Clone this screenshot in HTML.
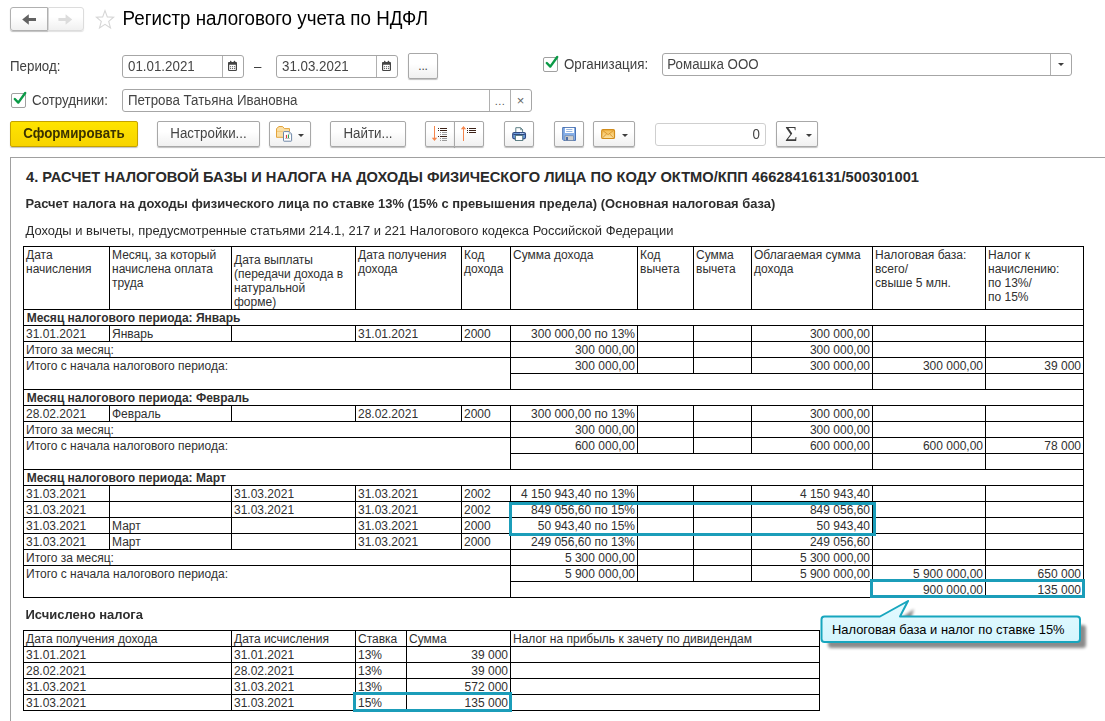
<!DOCTYPE html>
<html lang="ru">
<head>
<meta charset="utf-8">
<title>Регистр налогового учета по НДФЛ</title>
<style>
html,body{margin:0;padding:0;background:#fff;}
body{width:1105px;height:721px;position:relative;overflow:hidden;font-family:"Liberation Sans",Arial,sans-serif;color:#333;}
.abs{position:absolute;}
.t{position:absolute;white-space:nowrap;font-size:13.33px;line-height:16px;color:#404040;transform:scaleY(1.07);transform-origin:0 12.4px;}
.btn{position:absolute;box-sizing:border-box;border:1px solid #a8a8a8;border-radius:2px;background:linear-gradient(#ffffff 0%,#ffffff 40%,#f0f0f0 100%);box-shadow:0 1px 1px rgba(0,0,0,.25);}
.btn .lbl{position:absolute;left:0;right:0;text-align:center;font-size:13.33px;line-height:16px;color:#444;white-space:nowrap;transform:scaleY(1.07);transform-origin:0 12.4px;}
.inp{position:absolute;box-sizing:border-box;border:1px solid #a6a6a6;border-radius:3px;background:#fff;}
.inp .v{position:absolute;left:5px;font-size:13.33px;line-height:16px;color:#444;white-space:nowrap;transform:scaleY(1.07);transform-origin:0 12.4px;}
.inp .sep{position:absolute;top:0;bottom:0;width:1px;background:#b0b0b0;}
.chk{position:absolute;box-sizing:border-box;width:15px;height:15px;border:1px solid #a0a0a0;border-radius:2px;background:#fff;}
.arr{position:absolute;width:0;height:0;margin-left:.5px;border-left:3px solid transparent;border-right:3px solid transparent;border-top:3.3px solid #3e3e3e;}
#panel{position:absolute;left:10px;top:157px;width:1100px;height:600px;box-sizing:border-box;border:1px solid #a0a0a0;border-right:none;border-bottom:none;background:#fff;}
.c{position:absolute;box-sizing:border-box;border:1px solid #000;font-size:12px;line-height:14px;color:#303030;padding:1px 2px 0 2px;overflow:hidden;}
.c.r{text-align:right;padding-right:2px;}
.c.b{font-weight:bold;padding-left:2.7px;}
.c.h3{padding-top:6px;}
.hl{position:absolute;box-sizing:border-box;border:3px solid #1b9db9;}
</style>
</head>
<body>

<!-- navigation -->
<div class="btn" style="left:48px;top:7px;width:36px;height:24px;border-color:#dcdcdc;border-radius:0 3px 3px 0;box-shadow:0 1px 1px rgba(0,0,0,.12);"></div>
<div class="btn" style="left:10px;top:7px;width:38px;height:24px;border-radius:3px 0 0 3px;border-color:#b0b0b0;"></div>
<svg class="abs" style="left:10px;top:7px" width="74" height="24" viewBox="0 0 74 24">
  <path d="M12.2 12.5 L18.8 7.3 V11 H26 V14 H18.8 V17.7 Z" fill="#626262"/>
  <path d="M62.2 12.5 L55.6 7.3 V11 H48.4 V14 H55.6 V17.7 Z" fill="#dcdcdc"/>
</svg>
<svg class="abs" style="left:94px;top:8px" width="22" height="22" viewBox="0 0 22 22">
  <path d="M11 2.6 L13.3 8.9 L19.6 9.2 L14.7 13.4 L16.5 20 L11 16.3 L5.5 20 L7.3 13.4 L2.4 9.2 L8.7 8.9 Z" fill="none" stroke="#d6d6d6" stroke-width="1.1" stroke-linejoin="miter"/>
</svg>
<div class="abs" style="left:122.5px;top:5.6px;font-size:18.79px;line-height:26px;transform:scaleY(1.04);transform-origin:0 19.2px;color:#000;white-space:nowrap;">Регистр налогового учета по НДФЛ</div>

<!-- row 1 -->
<div class="t" style="left:10px;top:59px;">Период:</div>
<div class="inp" style="left:122px;top:55px;width:122px;height:23px;"><div class="v" style="top:3px">01.01.2021</div><div class="sep" style="left:99px"></div>
  <svg class="abs" style="left:103px;top:3px" width="14" height="14" viewBox="0 0 14 14"><rect x="2.6" y="3.6" width="7.8" height="7.9" rx=".8" fill="#fff" stroke="#444" stroke-width="1.2"/><rect x="2.2" y="3.2" width="8.6" height="2.5" rx=".6" fill="#444"/><rect x="4" y="1.7" width="1.3" height="2.2" rx=".5" fill="#444"/><rect x="7.8" y="1.7" width="1.3" height="2.2" rx=".5" fill="#444"/><g fill="#444"><rect x="4.1" y="7.2" width="1" height="1"/><rect x="6.1" y="7.2" width="1" height="1"/><rect x="8.1" y="7.2" width="1" height="1"/><rect x="4.1" y="9.1" width="1" height="1"/><rect x="6.1" y="9.1" width="1" height="1"/><rect x="8.1" y="9.1" width="1" height="1"/></g></svg>
</div>
<div class="t" style="left:254px;top:59px;">–</div>
<div class="inp" style="left:276px;top:55px;width:122px;height:23px;"><div class="v" style="top:3px">31.03.2021</div><div class="sep" style="left:99px"></div>
  <svg class="abs" style="left:103px;top:3px" width="14" height="14" viewBox="0 0 14 14"><rect x="2.6" y="3.6" width="7.8" height="7.9" rx=".8" fill="#fff" stroke="#444" stroke-width="1.2"/><rect x="2.2" y="3.2" width="8.6" height="2.5" rx=".6" fill="#444"/><rect x="4" y="1.7" width="1.3" height="2.2" rx=".5" fill="#444"/><rect x="7.8" y="1.7" width="1.3" height="2.2" rx=".5" fill="#444"/><g fill="#444"><rect x="4.1" y="7.2" width="1" height="1"/><rect x="6.1" y="7.2" width="1" height="1"/><rect x="8.1" y="7.2" width="1" height="1"/><rect x="4.1" y="9.1" width="1" height="1"/><rect x="6.1" y="9.1" width="1" height="1"/><rect x="8.1" y="9.1" width="1" height="1"/></g></svg>
</div>
<div class="btn" style="left:408px;top:53px;width:30px;height:26px;"><div class="lbl" style="top:4px;font-size:12px;color:#444;transform:none;letter-spacing:-.2px;">...</div></div>

<div class="chk" style="left:543px;top:57px;"></div>
<svg class="abs" style="left:543px;top:53px" width="20" height="20" viewBox="0 0 20 20"><path d="M3.8 10 L7.3 13.6 L14.2 4" fill="none" stroke="#0b9a47" stroke-width="2.4" stroke-linecap="round" stroke-linejoin="round"/></svg>
<div class="t" style="left:564px;top:57px;">Организация:</div>
<div class="inp" style="left:662px;top:53px;width:410px;height:23px;"><div class="v" style="top:3px;left:4.3px">Ромашка ООО</div><div class="sep" style="left:387px"></div><div class="arr" style="left:394px;top:9px"></div></div>

<!-- row 2 -->
<div class="chk" style="left:11px;top:93px;"></div>
<svg class="abs" style="left:11px;top:89px" width="20" height="20" viewBox="0 0 20 20"><path d="M3.8 10 L7.3 13.6 L14.2 4" fill="none" stroke="#0b9a47" stroke-width="2.4" stroke-linecap="round" stroke-linejoin="round"/></svg>
<div class="t" style="left:32px;top:92.5px;">Сотрудники:</div>
<div class="inp" style="left:122px;top:89px;width:410px;height:23px;"><div class="v" style="top:3px">Петрова Татьяна Ивановна</div><div class="sep" style="left:366px"></div><div class="sep" style="left:387px"></div>
  <div class="abs" style="left:367px;top:3px;width:20px;text-align:center;font-size:11px;line-height:16px;color:#555;letter-spacing:.4px;">...</div>
  <div class="abs" style="left:387.5px;top:2.5px;width:20px;text-align:center;font-size:13px;line-height:16px;color:#666;">×</div>
</div>

<!-- row 3 buttons -->
<div class="btn" style="left:10px;top:121px;width:128px;height:26px;border-color:#c4a200;background:linear-gradient(#ffe400,#f7d400);"><div class="lbl" style="top:4px;font-weight:bold;color:#3a3200;">Сформировать</div></div>
<div class="btn" style="left:157px;top:121px;width:103px;height:26px;"><div class="lbl" style="top:4px">Настройки...</div></div>
<div class="btn" style="left:269px;top:121px;width:42px;height:26px;">
  <svg class="abs" style="left:5px;top:3px" width="20" height="20" viewBox="0 0 20 20">
    <path d="M1.5 3.6 L4 1.5 H7.6 L9.4 3.6 H14.5 V12.3 H1.5 Z" fill="#fbe0a6" stroke="#e3a43c" stroke-width="1" stroke-linejoin="round"/>
    <path d="M2 6.4 H8" stroke="#f3c777" stroke-width="1"/>
    <path d="M8.5 7.2 Q8.5 6.6 9.1 6.6 H14.2 L16.6 9 V15.6 Q16.6 16.2 16 16.2 H9.1 Q8.5 16.2 8.5 15.6 Z" fill="#fff" stroke="#6d86a6" stroke-width="1"/>
    <path d="M14.2 6.6 V9 H16.6" fill="none" stroke="#9fb0c6" stroke-width=".8"/>
    <rect x="10.9" y="9.9" width="1.1" height="3.2" fill="#e03a3a"/><rect x="12.9" y="9.5" width="1.1" height="3.6" fill="#2fa052"/>
    <rect x="10.1" y="13.1" width="4.8" height=".6" fill="#999"/>
  </svg>
  <div class="arr" style="left:27.5px;top:11.7px"></div>
</div>
<div class="btn" style="left:330px;top:121px;width:76px;height:26px;"><div class="lbl" style="top:4px">Найти...</div></div>
<div class="btn" style="left:425px;top:121px;width:30px;height:26px;border-radius:2px 0 0 2px;">
  <svg class="abs" style="left:4px;top:3px" width="22" height="20" viewBox="0 0 22 20" shape-rendering="crispEdges">
    <rect x="4" y="1" width="1" height="13" fill="#f5854b"/><path d="M1.8 12.8 H7.2 L4.5 16 Z" fill="#f5854b" shape-rendering="geometricPrecision"/>
    <g fill="#3b2117"><rect x="8" y="3" width="1" height="1"/><rect x="10" y="3" width="7" height="1"/><rect x="8" y="5" width="1" height="1"/><rect x="10" y="5" width="7" height="1"/><rect x="8" y="11" width="1" height="1"/><rect x="10" y="11" width="7" height="1"/></g>
    <g fill="#9a9a9a"><rect x="10" y="7" width="1" height="1"/><rect x="12" y="7" width="5" height="1"/><rect x="10" y="9" width="1" height="1"/><rect x="12" y="9" width="5" height="1"/><rect x="10" y="13" width="1" height="1"/><rect x="12" y="13" width="5" height="1"/><rect x="10" y="15" width="1" height="1"/><rect x="12" y="15" width="5" height="1"/></g>
  </svg>
</div>
<div class="btn" style="left:454px;top:121px;width:30px;height:26px;border-radius:0 2px 2px 0;">
  <svg class="abs" style="left:4px;top:3px" width="22" height="20" viewBox="0 0 22 20" shape-rendering="crispEdges">
    <rect x="4" y="3" width="1" height="13" fill="#f5854b"/><path d="M1.8 4.2 H7.2 L4.5 1 Z" fill="#f5854b" shape-rendering="geometricPrecision"/>
    <g fill="#3b2117"><rect x="8" y="3" width="1" height="1"/><rect x="10" y="3" width="7" height="1"/><rect x="8" y="5" width="1" height="1"/><rect x="10" y="5" width="7" height="1"/><rect x="8" y="7" width="1" height="1"/><rect x="10" y="7" width="7" height="1"/></g>
  </svg>
</div>
<div class="btn" style="left:504px;top:121px;width:30px;height:26px;">
  <svg class="abs" style="left:6px;top:4px" width="18" height="18" viewBox="0 0 18 18">
    <path d="M4.8 1.7 H9.6 L11.6 3.7 V7 H4.8 Z" fill="#fff" stroke="#5d7f86" stroke-width="1" stroke-linejoin="round"/>
    <path d="M9.6 1.7 V3.7 H11.6" fill="none" stroke="#5d7f86" stroke-width=".8"/>
    <rect x="1.7" y="6.5" width="12.8" height="6.4" rx="1.6" fill="#6d9cdb" stroke="#2f4880" stroke-width="1.1"/>
    <rect x="2.4" y="8" width="11.4" height="1" fill="#2f4880"/>
    <rect x="9.4" y="6.9" width="1" height=".9" fill="#fff"/><rect x="11.3" y="6.9" width="1" height=".9" fill="#fff"/>
    <rect x="4.5" y="9.5" width="7.2" height="5" fill="#fff" stroke="#5d7f86" stroke-width="1"/>
  </svg>
</div>
<div class="btn" style="left:554px;top:121px;width:30px;height:26px;">
  <svg class="abs" style="left:7px;top:5px" width="16" height="16" viewBox="0 0 16 16">
    <path d="M0.7 0.5 H13.5 V13.4 H1.7 L0.7 12.4 Z" fill="#86afe8" stroke="#4a73b4" stroke-width="1" stroke-linejoin="round"/>
    <rect x="3" y="0.9" width="9" height="5.1" fill="#fff"/>
    <rect x="4.2" y="2.2" width="6.2" height=".8" fill="#7fa5da"/><rect x="4.2" y="4" width="6.2" height=".8" fill="#7fa5da"/>
    <rect x="3" y="8.8" width="8.4" height="4.6" fill="#cfcfcf" stroke="#6a7f9c" stroke-width=".6"/>
    <rect x="4.1" y="10" width="1.8" height="3.2" fill="#3d63a4"/>
  </svg>
</div>
<div class="btn" style="left:593px;top:121px;width:42px;height:26px;">
  <svg class="abs" style="left:6px;top:6px" width="18" height="14" viewBox="0 0 18 14">
    <defs><linearGradient id="mg" x1="0" y1="0" x2="0" y2="1"><stop offset="0" stop-color="#f4b94a"/><stop offset="1" stop-color="#fbe2a2"/></linearGradient></defs>
    <rect x="1.7" y="1.6" width="12.8" height="8.9" rx="1.3" fill="url(#mg)" stroke="#d18c1b" stroke-width="1.2"/>
    <path d="M2.6 2.4 L8.1 6.6 L13.6 2.4 M2.6 9.8 L6.8 5.7 M13.6 9.8 L9.4 5.7" fill="none" stroke="#d8932c" stroke-width=".9"/>
  </svg>
  <div class="arr" style="left:27.5px;top:11.7px"></div>
</div>
<div class="inp" style="left:655px;top:123px;width:111px;height:23px;border-color:#cfcfcf;"><div class="v" style="left:auto;right:5px;top:3px">0</div></div>
<div class="btn" style="left:776px;top:121px;width:42px;height:26px;">
  <div class="abs" style="left:7.6px;top:1px;font-family:'Liberation Serif',serif;font-size:20px;line-height:22px;color:#3c3c3c;transform:scaleX(1.07);transform-origin:0 0;">Σ</div>
  <div class="arr" style="left:28px;top:11.7px"></div>
</div>

<!-- report panel -->
<div id="panel"></div>
<div class="abs" style="left:26px;top:167.5px;font-size:14.67px;line-height:18px;font-weight:bold;color:#2a2a2a;white-space:nowrap;">4. РАСЧЕТ НАЛОГОВОЙ БАЗЫ И НАЛОГА НА ДОХОДЫ ФИЗИЧЕСКОГО ЛИЦА ПО КОДУ ОКТМО/КПП 46628416131/500301001</div>
<div class="abs" style="left:25.5px;top:196px;font-size:12.94px;line-height:16px;font-weight:bold;color:#2e2e2e;transform:scaleY(1.04);transform-origin:0 12.2px;white-space:nowrap;">Расчет налога на доходы физического лица по ставке 13% (15% с превышения предела) (Основная налоговая база)</div>
<div class="abs" style="left:25.5px;top:223.2px;font-size:12.96px;line-height:16px;color:#2a2a2a;transform:scaleY(1.05);transform-origin:0 12.2px;white-space:nowrap;">Доходы и вычеты, предусмотренные статьями 214.1, 217 и 221 Налогового кодекса Российской Федерации</div>
<div class="abs" style="left:25.5px;top:607px;font-size:13px;line-height:16px;font-weight:bold;color:#2e2e2e;transform:scaleY(1.04);transform-origin:0 12.2px;white-space:nowrap;">Исчислено налога</div>

<div class="c" style="left:23px;top:246px;width:87px;height:64px;">Дата<br>начисления</div>
<div class="c" style="left:109px;top:246px;width:123px;height:64px;">Месяц, за который<br>начислена оплата<br>труда</div>
<div class="c h3" style="left:231px;top:246px;width:125px;height:64px;">Дата выплаты<br>(передачи дохода в<br>натуральной<br>форме)</div>
<div class="c" style="left:355px;top:246px;width:107px;height:64px;">Дата получения<br>дохода</div>
<div class="c" style="left:461px;top:246px;width:50px;height:64px;">Код<br>дохода</div>
<div class="c" style="left:510px;top:246px;width:128px;height:64px;">Сумма дохода</div>
<div class="c" style="left:637px;top:246px;width:57px;height:64px;">Код<br>вычета</div>
<div class="c" style="left:693px;top:246px;width:59px;height:64px;">Сумма<br>вычета</div>
<div class="c" style="left:751px;top:246px;width:122px;height:64px;">Облагаемая сумма<br>дохода</div>
<div class="c" style="left:872px;top:246px;width:114px;height:64px;">Налоговая база:<br>всего/<br>свыше 5 млн.</div>
<div class="c" style="left:985px;top:246px;width:99px;height:64px;">Налог к<br>начислению:<br>по 13%/<br>по 15%</div>
<div class="c b" style="left:23px;top:309px;width:1061px;height:17px;">Месяц налогового периода: Январь</div>
<div class="c" style="left:23px;top:325px;width:87px;height:17px;">31.01.2021</div>
<div class="c" style="left:109px;top:325px;width:123px;height:17px;">Январь</div>
<div class="c" style="left:231px;top:325px;width:125px;height:17px;"></div>
<div class="c" style="left:355px;top:325px;width:107px;height:17px;">31.01.2021</div>
<div class="c" style="left:461px;top:325px;width:50px;height:17px;">2000</div>
<div class="c r" style="left:510px;top:325px;width:128px;height:17px;">300 000,00 по 13%</div>
<div class="c" style="left:637px;top:325px;width:57px;height:17px;"></div>
<div class="c r" style="left:693px;top:325px;width:59px;height:17px;"></div>
<div class="c r" style="left:751px;top:325px;width:122px;height:17px;">300 000,00</div>
<div class="c r" style="left:872px;top:325px;width:114px;height:17px;"></div>
<div class="c r" style="left:985px;top:325px;width:99px;height:17px;"></div>
<div class="c" style="left:23px;top:341px;width:488px;height:17px;">Итого за месяц:</div>
<div class="c r" style="left:510px;top:341px;width:128px;height:17px;">300 000,00</div>
<div class="c r" style="left:637px;top:341px;width:57px;height:17px;"></div>
<div class="c r" style="left:693px;top:341px;width:59px;height:17px;"></div>
<div class="c r" style="left:751px;top:341px;width:122px;height:17px;">300 000,00</div>
<div class="c r" style="left:872px;top:341px;width:114px;height:17px;"></div>
<div class="c r" style="left:985px;top:341px;width:99px;height:17px;"></div>
<div class="c" style="left:23px;top:357px;width:488px;height:33px;">Итого с начала налогового периода:</div>
<div class="c r" style="left:510px;top:357px;width:128px;height:17px;">300 000,00</div>
<div class="c r" style="left:637px;top:357px;width:57px;height:17px;"></div>
<div class="c r" style="left:693px;top:357px;width:59px;height:17px;"></div>
<div class="c r" style="left:751px;top:357px;width:122px;height:17px;">300 000,00</div>
<div class="c r" style="left:872px;top:357px;width:114px;height:17px;">300 000,00</div>
<div class="c r" style="left:985px;top:357px;width:99px;height:17px;">39 000</div>
<div class="c" style="left:510px;top:373px;width:363px;height:17px;"></div>
<div class="c r" style="left:872px;top:373px;width:114px;height:17px;"></div>
<div class="c r" style="left:985px;top:373px;width:99px;height:17px;"></div>
<div class="c b" style="left:23px;top:389px;width:1061px;height:17px;">Месяц налогового периода: Февраль</div>
<div class="c" style="left:23px;top:405px;width:87px;height:17px;">28.02.2021</div>
<div class="c" style="left:109px;top:405px;width:123px;height:17px;">Февраль</div>
<div class="c" style="left:231px;top:405px;width:125px;height:17px;"></div>
<div class="c" style="left:355px;top:405px;width:107px;height:17px;">28.02.2021</div>
<div class="c" style="left:461px;top:405px;width:50px;height:17px;">2000</div>
<div class="c r" style="left:510px;top:405px;width:128px;height:17px;">300 000,00 по 13%</div>
<div class="c" style="left:637px;top:405px;width:57px;height:17px;"></div>
<div class="c r" style="left:693px;top:405px;width:59px;height:17px;"></div>
<div class="c r" style="left:751px;top:405px;width:122px;height:17px;">300 000,00</div>
<div class="c r" style="left:872px;top:405px;width:114px;height:17px;"></div>
<div class="c r" style="left:985px;top:405px;width:99px;height:17px;"></div>
<div class="c" style="left:23px;top:421px;width:488px;height:17px;">Итого за месяц:</div>
<div class="c r" style="left:510px;top:421px;width:128px;height:17px;">300 000,00</div>
<div class="c r" style="left:637px;top:421px;width:57px;height:17px;"></div>
<div class="c r" style="left:693px;top:421px;width:59px;height:17px;"></div>
<div class="c r" style="left:751px;top:421px;width:122px;height:17px;">300 000,00</div>
<div class="c r" style="left:872px;top:421px;width:114px;height:17px;"></div>
<div class="c r" style="left:985px;top:421px;width:99px;height:17px;"></div>
<div class="c" style="left:23px;top:437px;width:488px;height:33px;">Итого с начала налогового периода:</div>
<div class="c r" style="left:510px;top:437px;width:128px;height:17px;">600 000,00</div>
<div class="c r" style="left:637px;top:437px;width:57px;height:17px;"></div>
<div class="c r" style="left:693px;top:437px;width:59px;height:17px;"></div>
<div class="c r" style="left:751px;top:437px;width:122px;height:17px;">600 000,00</div>
<div class="c r" style="left:872px;top:437px;width:114px;height:17px;">600 000,00</div>
<div class="c r" style="left:985px;top:437px;width:99px;height:17px;">78 000</div>
<div class="c" style="left:510px;top:453px;width:363px;height:17px;"></div>
<div class="c r" style="left:872px;top:453px;width:114px;height:17px;"></div>
<div class="c r" style="left:985px;top:453px;width:99px;height:17px;"></div>
<div class="c b" style="left:23px;top:469px;width:1061px;height:17px;">Месяц налогового периода: Март</div>
<div class="c" style="left:23px;top:485px;width:87px;height:17px;">31.03.2021</div>
<div class="c" style="left:109px;top:485px;width:123px;height:17px;"></div>
<div class="c" style="left:231px;top:485px;width:125px;height:17px;">31.03.2021</div>
<div class="c" style="left:355px;top:485px;width:107px;height:17px;">31.03.2021</div>
<div class="c" style="left:461px;top:485px;width:50px;height:17px;">2002</div>
<div class="c r" style="left:510px;top:485px;width:128px;height:17px;">4 150 943,40 по 13%</div>
<div class="c" style="left:637px;top:485px;width:57px;height:17px;"></div>
<div class="c r" style="left:693px;top:485px;width:59px;height:17px;"></div>
<div class="c r" style="left:751px;top:485px;width:122px;height:17px;">4 150 943,40</div>
<div class="c r" style="left:872px;top:485px;width:114px;height:17px;"></div>
<div class="c r" style="left:985px;top:485px;width:99px;height:17px;"></div>
<div class="c" style="left:23px;top:501px;width:87px;height:17px;">31.03.2021</div>
<div class="c" style="left:109px;top:501px;width:123px;height:17px;"></div>
<div class="c" style="left:231px;top:501px;width:125px;height:17px;">31.03.2021</div>
<div class="c" style="left:355px;top:501px;width:107px;height:17px;">31.03.2021</div>
<div class="c" style="left:461px;top:501px;width:50px;height:17px;">2002</div>
<div class="c r" style="left:510px;top:501px;width:128px;height:17px;">849 056,60 по 15%</div>
<div class="c" style="left:637px;top:501px;width:57px;height:17px;"></div>
<div class="c r" style="left:693px;top:501px;width:59px;height:17px;"></div>
<div class="c r" style="left:751px;top:501px;width:122px;height:17px;">849 056,60</div>
<div class="c r" style="left:872px;top:501px;width:114px;height:17px;"></div>
<div class="c r" style="left:985px;top:501px;width:99px;height:17px;"></div>
<div class="c" style="left:23px;top:517px;width:87px;height:17px;">31.03.2021</div>
<div class="c" style="left:109px;top:517px;width:123px;height:17px;">Март</div>
<div class="c" style="left:231px;top:517px;width:125px;height:17px;"></div>
<div class="c" style="left:355px;top:517px;width:107px;height:17px;">31.03.2021</div>
<div class="c" style="left:461px;top:517px;width:50px;height:17px;">2000</div>
<div class="c r" style="left:510px;top:517px;width:128px;height:17px;">50 943,40 по 15%</div>
<div class="c" style="left:637px;top:517px;width:57px;height:17px;"></div>
<div class="c r" style="left:693px;top:517px;width:59px;height:17px;"></div>
<div class="c r" style="left:751px;top:517px;width:122px;height:17px;">50 943,40</div>
<div class="c r" style="left:872px;top:517px;width:114px;height:17px;"></div>
<div class="c r" style="left:985px;top:517px;width:99px;height:17px;"></div>
<div class="c" style="left:23px;top:533px;width:87px;height:17px;">31.03.2021</div>
<div class="c" style="left:109px;top:533px;width:123px;height:17px;">Март</div>
<div class="c" style="left:231px;top:533px;width:125px;height:17px;"></div>
<div class="c" style="left:355px;top:533px;width:107px;height:17px;">31.03.2021</div>
<div class="c" style="left:461px;top:533px;width:50px;height:17px;">2000</div>
<div class="c r" style="left:510px;top:533px;width:128px;height:17px;">249 056,60 по 13%</div>
<div class="c" style="left:637px;top:533px;width:57px;height:17px;"></div>
<div class="c r" style="left:693px;top:533px;width:59px;height:17px;"></div>
<div class="c r" style="left:751px;top:533px;width:122px;height:17px;">249 056,60</div>
<div class="c r" style="left:872px;top:533px;width:114px;height:17px;"></div>
<div class="c r" style="left:985px;top:533px;width:99px;height:17px;"></div>
<div class="c" style="left:23px;top:549px;width:488px;height:17px;">Итого за месяц:</div>
<div class="c r" style="left:510px;top:549px;width:128px;height:17px;">5 300 000,00</div>
<div class="c r" style="left:637px;top:549px;width:57px;height:17px;"></div>
<div class="c r" style="left:693px;top:549px;width:59px;height:17px;"></div>
<div class="c r" style="left:751px;top:549px;width:122px;height:17px;">5 300 000,00</div>
<div class="c r" style="left:872px;top:549px;width:114px;height:17px;"></div>
<div class="c r" style="left:985px;top:549px;width:99px;height:17px;"></div>
<div class="c" style="left:23px;top:565px;width:488px;height:33px;">Итого с начала налогового периода:</div>
<div class="c r" style="left:510px;top:565px;width:128px;height:17px;">5 900 000,00</div>
<div class="c r" style="left:637px;top:565px;width:57px;height:17px;"></div>
<div class="c r" style="left:693px;top:565px;width:59px;height:17px;"></div>
<div class="c r" style="left:751px;top:565px;width:122px;height:17px;">5 900 000,00</div>
<div class="c r" style="left:872px;top:565px;width:114px;height:17px;">5 900 000,00</div>
<div class="c r" style="left:985px;top:565px;width:99px;height:17px;">650 000</div>
<div class="c" style="left:510px;top:581px;width:363px;height:17px;"></div>
<div class="c r" style="left:872px;top:581px;width:114px;height:17px;">900 000,00</div>
<div class="c r" style="left:985px;top:581px;width:99px;height:17px;">135 000</div>
<div class="c" style="left:23px;top:630px;width:209px;height:17px;">Дата получения дохода</div>
<div class="c" style="left:231px;top:630px;width:125px;height:17px;">Дата исчисления</div>
<div class="c" style="left:355px;top:630px;width:52px;height:17px;">Ставка</div>
<div class="c" style="left:406px;top:630px;width:105px;height:17px;">Сумма</div>
<div class="c" style="left:510px;top:630px;width:310px;height:17px;">Налог на прибыль к зачету по дивидендам</div>
<div class="c" style="left:23px;top:646px;width:209px;height:17px;">31.01.2021</div>
<div class="c" style="left:231px;top:646px;width:125px;height:17px;">31.01.2021</div>
<div class="c" style="left:355px;top:646px;width:52px;height:17px;">13%</div>
<div class="c r" style="left:406px;top:646px;width:105px;height:17px;">39 000</div>
<div class="c" style="left:510px;top:646px;width:310px;height:17px;"></div>
<div class="c" style="left:23px;top:662px;width:209px;height:17px;">28.02.2021</div>
<div class="c" style="left:231px;top:662px;width:125px;height:17px;">28.02.2021</div>
<div class="c" style="left:355px;top:662px;width:52px;height:17px;">13%</div>
<div class="c r" style="left:406px;top:662px;width:105px;height:17px;">39 000</div>
<div class="c" style="left:510px;top:662px;width:310px;height:17px;"></div>
<div class="c" style="left:23px;top:678px;width:209px;height:17px;">31.03.2021</div>
<div class="c" style="left:231px;top:678px;width:125px;height:17px;">31.03.2021</div>
<div class="c" style="left:355px;top:678px;width:52px;height:17px;">13%</div>
<div class="c r" style="left:406px;top:678px;width:105px;height:17px;">572 000</div>
<div class="c" style="left:510px;top:678px;width:310px;height:17px;"></div>
<div class="c" style="left:23px;top:694px;width:209px;height:17px;">31.03.2021</div>
<div class="c" style="left:231px;top:694px;width:125px;height:17px;">31.03.2021</div>
<div class="c" style="left:355px;top:694px;width:52px;height:17px;">15%</div>
<div class="c r" style="left:406px;top:694px;width:105px;height:17px;">135 000</div>
<div class="c" style="left:510px;top:694px;width:310px;height:17px;"></div>

<!-- highlights -->
<div class="hl" style="left:509px;top:502px;width:367px;height:34px;"></div>
<div class="hl" style="left:870px;top:579px;width:215px;height:19px;"></div>
<div class="hl" style="left:353px;top:692px;width:159px;height:20px;"></div>

<!-- callout -->
<svg class="abs" style="left:810px;top:596px" width="290" height="62" viewBox="0 0 290 62">
  <defs>
    <linearGradient id="cg" x1="0" y1="0" x2="0" y2="1"><stop offset="0" stop-color="#e4faff"/><stop offset="1" stop-color="#d4f5fd"/></linearGradient>
    <filter id="sh" x="-10%" y="-20%" width="125%" height="160%"><feGaussianBlur stdDeviation="1.6"/></filter>
  </defs>
  <path d="M16 24 Q13 24 13 27 V44 Q13 47 16 47 H268 Q271 47 271 44 V27 Q271 24 268 24 H94 L99 8 L76 24 Z" transform="translate(5,5)" fill="#000" opacity=".45" filter="url(#sh)"/>
  <path d="M14.5 20.5 Q11.5 20.5 11.5 23.5 V43 Q11.5 46 14.5 46 H267 Q270 46 270 43 V23.5 Q270 20.5 267 20.5 H90 L98 5 L70 20.5 Z" fill="url(#cg)" stroke="#17a6be" stroke-width="2" stroke-linejoin="round"/>
  <text x="22" y="38" font-family="Liberation Sans, Arial, sans-serif" font-size="12.9" fill="#000">Налоговая база и налог по ставке 15%</text>
</svg>

</body>
</html>
